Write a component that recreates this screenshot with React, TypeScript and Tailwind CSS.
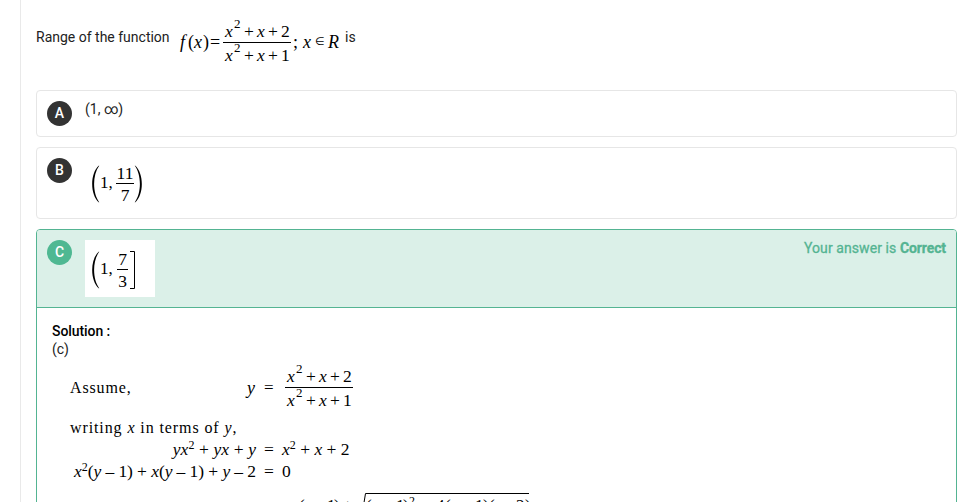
import type { ReactNode } from "react";

const serif = "font-['Liberation_Serif',serif] text-black";

function Tok({ w, children, className = "" }: { w: string; children: ReactNode; className?: string }) {
  return <span className={`block shrink-0 whitespace-pre ${w} ${className}`}>{children}</span>;
}

function Sq() {
  return <sup className="text-[12px]">2</sup>;
}

function Polynomial({ last }: { last: string }) {
  return (
    <span className="flex h-[20px] pl-[2px] leading-[20px]">
      <Tok w="w-[9px]" className="italic">x</Tok>
      <Tok w="w-[10px]" className="-mt-[7px] text-[13px]">2</Tok>
      <Tok w="w-[13px]">+</Tok>
      <Tok w="w-[11px]" className="italic">x</Tok>
      <Tok w="w-[13px]">+</Tok>
      <Tok w="w-[9px]">{last}</Tok>
    </span>
  );
}

function PolyFraction() {
  return (
    <span className="block w-[68px] shrink-0 text-[17.5px]">
      <Polynomial last="2" />
      <span className="mt-[1px] block h-px bg-black" />
      <span className="mt-[2px] block"><Polynomial last="1" /></span>
    </span>
  );
}

function SmallFraction({ top, bottom, width }: { top: string; bottom: string; width: string }) {
  return (
    <span className={`block text-center text-[17.5px] ${width}`}>
      <span className="-mt-[2px] block h-[20px] leading-[20px]">{top}</span>
      <span className="block h-px bg-black" />
      <span className="block h-[20px] pt-[1px] leading-[20px]">{bottom}</span>
    </span>
  );
}

function TallParen({ flip = false }: { flip?: boolean }) {
  return (
    <svg className={`h-[38px] w-[9px] shrink-0 ${flip ? "-scale-x-100" : ""}`} viewBox="0 0 9 38" fill="black">
      <path d="M8 .5C-1.1 8-1.1 30 8 37.5L8.2 37.2C1.4 28 1.4 10 8.2 .8Z" />
    </svg>
  );
}

function Badge({ children, color }: { children: ReactNode; color: string }) {
  return (
    <span className={`flex size-[25px] shrink-0 items-center justify-center rounded-full text-[14px] font-medium text-white ${color}`}>
      {children}
    </span>
  );
}

export default function App() {
  return (
    <div className="h-[502px] w-[959px] overflow-hidden bg-white pl-[20px] font-[Roboto,sans-serif] text-[14px] text-[#222]">
      <main className="h-[502px] border-l border-[#e9e9e9] pr-[2px] pl-[15px]">
        <div className="flex h-[90px]">
          <span className="w-[143px] shrink-0 pt-[27px] leading-[20px] whitespace-nowrap">Range of the function</span>
          <span className={`flex pt-[31px] text-[18px] leading-[22px] ${serif}`}>
            <Tok w="w-[9px]" className="pl-[1px] italic">f</Tok>
            <Tok w="w-[6px]">(</Tok>
            <Tok w="w-[9px]" className="italic">x</Tok>
            <Tok w="w-[7px]">)</Tok>
            <Tok w="w-[13px]">=</Tok>
          </span>
          <span className={`pt-[21px] ${serif}`}><PolyFraction /></span>
          <span className={`flex pt-[31px] pl-[2px] text-[18px] leading-[22px] ${serif}`}>
            <Tok w="w-[10px]">;</Tok>
            <Tok w="w-[12px]" className="italic">x</Tok>
            <Tok w="w-[13px]" className="font-['DejaVu_Sans'] text-[11px]">∈</Tok>
            <Tok w="w-[17px]" className="italic">R</Tok>
          </span>
          <span className="pt-[27px] leading-[20px]">is</span>
        </div>

        <section className="flex h-[47px] rounded-[4px] border border-[#e6e6e6] px-[10px] pt-[10px]">
          <Badge color="bg-[#333]">A</Badge>
          <span className="ml-[13px] leading-[17px]">(1, ∞)</span>
        </section>

        <section className="mt-[10px] flex h-[72px] rounded-[4px] border border-[#e6e6e6] px-[10px] pt-[10px]">
          <Badge color="bg-[#333]">B</Badge>
          <span className={`ml-[19px] flex pt-[7px] ${serif}`}>
            <TallParen />
            <Tok w="w-[16px]" className="pt-[8px] text-[17px] leading-[20px]">1,</Tok>
            <SmallFraction top="11" bottom="7" width="w-[18px]" />
            <TallParen flip />
          </span>
        </section>

        <section className="mt-[10px] h-[300px] rounded-[4px] border border-[#54b492]">
          <div className="flex h-[78px] justify-between rounded-t-[3px] border-b border-[#54b492] bg-[#dbf0e8] px-[10px] pt-[10px]">
            <div className="flex">
              <Badge color="bg-[#4fb892]">C</Badge>
              <span className={`ml-[13px] flex h-[57px] w-[70px] bg-white pt-[11px] pl-[6px] ${serif}`}>
                <TallParen />
                <Tok w="w-[17px]" className="pt-[8px] text-[17px] leading-[20px]">1,</Tok>
                <SmallFraction top="7" bottom="3" width="w-[11px]" />
                <svg className="h-[38px] w-[7px]" viewBox="0 0 7 38" fill="none" stroke="black">
                  <path d="M2 .5H6.5V37.5H2" />
                </svg>
              </span>
            </div>
            <span className="leading-[17px] tracking-[0.08px] text-[#54b492] [-webkit-text-stroke:0.3px_#54b492]">
              Your answer is <b className="tracking-[-0.1px]">Correct</b>
            </span>
          </div>

          <div className="pt-[15px] pl-[15px]">
            <div className="h-[17px] leading-[17px] font-medium tracking-[-0.08px] text-black">Solution :</div>
            <div className="h-[18px] leading-[18px]">(c)</div>
            <div className={`flex h-[59px] pl-[18px] ${serif}`}>
              <Tok w="w-[177px]" className="pt-[19px] text-[16px] leading-[22px] tracking-[0.85px]">Assume,</Tok>
              <Tok w="w-[17px]" className="pt-[19px] text-[18px] leading-[22px] italic">y</Tok>
              <Tok w="w-[21px]" className="pt-[19px] text-[17px] leading-[22px]">=</Tok>
              <span className="pt-[8px]"><PolyFraction /></span>
            </div>
            <div className={`h-[22px] pl-[18px] text-[16px] leading-[22px] tracking-[0.9px] ${serif}`}>
              writing <i>x</i> in terms of <i>y</i>,
            </div>
            <div className={`flex h-[22px] text-[17.5px] leading-[20px] ${serif}`}>
              <span className="w-[204px] text-right tracking-[0.1px]"><i>yx</i><Sq /> + <i>yx</i> + <i>y</i></span>
              <Tok w="w-[26px]" className="pl-[8px]">=</Tok>
              <span className="whitespace-nowrap"><i>x</i><Sq /> + <i>x</i> + 2</span>
            </div>
            <div className={`flex h-[22px] text-[17.5px] leading-[20px] ${serif}`}>
              <span className="w-[204px] text-right tracking-[-0.08px] whitespace-nowrap"><i>x</i><Sq />(<i>y</i> – 1) + <i>x</i>(<i>y</i> – 1) + <i>y</i> – 2</span>
              <Tok w="w-[26px]" className="pl-[8px]">=</Tok>
              <span>0</span>
            </div>
            <div className={`flex h-[30px] pt-[10px] pl-[240px] text-[17px] ${serif}`}>
              <span className="flex pt-[2px] leading-[22px]">
                <Tok w="w-[7px]">–</Tok><Tok w="w-[6px]">(</Tok><Tok w="w-[12px]" className="italic">y</Tok>
                <Tok w="w-[10px]">–</Tok><Tok w="w-[7px]">1</Tok><Tok w="w-[9px]">)</Tok><Tok w="w-[17px]">±</Tok>
              </span>
              <svg className="h-[26px] w-[6px] shrink-0" viewBox="0 0 6 26" fill="none" stroke="black">
                <path d="M0 22L1.5 25L5.5 .5H6" />
              </svg>
              <span className="flex h-[26px] w-[163px] border-t border-black pt-[1px] leading-[22px]">
                <Tok w="w-[6px]">(</Tok><Tok w="w-[12px]" className="italic">y</Tok><Tok w="w-[12px]">–</Tok>
                <Tok w="w-[7px]">1</Tok><Tok w="w-[6px]">)</Tok><Tok w="w-[14px]" className="-mt-[5px] text-[12px]">2</Tok>
                <Tok w="w-[13px]">–</Tok><Tok w="w-[9px]">4</Tok><Tok w="w-[7px]">(</Tok>
                <Tok w="w-[12px]" className="italic">y</Tok><Tok w="w-[11px]">–</Tok><Tok w="w-[8px]">1</Tok>
                <Tok w="w-[6px]">)</Tok><Tok w="w-[6px]">(</Tok><Tok w="w-[12px]" className="italic">y</Tok>
                <Tok w="w-[9px]">–</Tok><Tok w="w-[9px]">2</Tok><Tok w="w-[6px]">)</Tok>
              </span>
            </div>
          </div>
        </section>
      </main>
    </div>
  );
}
